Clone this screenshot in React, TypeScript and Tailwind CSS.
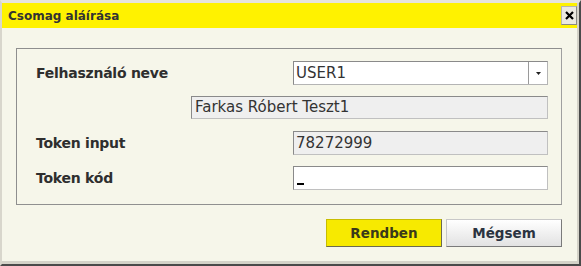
import React from "react";

const font = { fontFamily: '"DejaVu Sans", Verdana, sans-serif' };

export default function App() {
  return (
    <div className="w-[581px] h-[266px] bg-white" style={font}>
      <div className="w-[581px] h-[266px] flex flex-col border-l-2 border-t-[3px] border-l-[#d8d6cc] border-t-[#e6e4dc] border-r-2 border-b-2 border-r-[#4a4a4a] border-b-[#4a4a4a]">
        <div className="flex-1 flex flex-col border-r-2 border-b-[3px] border-r-[#d4d2c8] border-b-[#d4d2c8] bg-[#f6f6ea]">
          {/* Title bar */}
          <div className="h-[25px] bg-[#fff200] flex items-center justify-between pl-[6px] pr-0">
            <span className="text-[12px] font-bold text-[#333] leading-none">Csomag aláírása</span>
            <button className="w-[16px] h-[19px] flex items-center justify-center bg-[#ebe9e0] border border-[#b8b6ac] border-r-[#8a8a84] border-b-[#8a8a84]">
              <svg width="9" height="9" viewBox="0 0 9 9">
                <path d="M1 1 L8 8 M8 1 L1 8" stroke="#000" strokeWidth="2.2" />
              </svg>
            </button>
          </div>
          {/* Body */}
          <div className="flex-1 flex flex-col pl-[14px] pr-[15px] pt-[20px]">
            <div className="h-[157px] border border-[#8e8e8e] border-r-[#a0a0a0] border-b-[#909090] pl-[19px] pr-[13px] pt-[12px] flex flex-col">
              {/* Row 1 */}
              <div className="flex items-center h-[24px]">
                <div className="w-[257px] text-[14px] tracking-[-0.25px] font-bold text-[#2e2e2e]">Felhasználó neve</div>
                <div className="flex-1 h-[24px] flex border border-[#8a8a8a] border-b-[#b4b4b4] border-r-[#b4b4b4] bg-white">
                  <div className="flex-1 flex items-center pl-[2px] text-[15px] text-[#333]">USER1</div>
                  <div className="w-[19px] h-full border-l border-[#9a9a9a] flex items-center justify-center bg-white">
                    <svg width="5" height="3" viewBox="0 0 5 3">
                      <path d="M0 0 H5 L2.5 3 Z" fill="#222" />
                    </svg>
                  </div>
                </div>
              </div>
              {/* Row 2 */}
              <div className="flex items-center h-[24px] mt-[10px]">
                <div className="w-[155px]" />
                <div className="flex-1 h-[23px] flex items-center pl-[3px] bg-[#efefef] border border-[#8a8a8a] border-b-[#c0c0c0] border-r-[#c0c0c0] text-[15px] text-[#333]">
                  Farkas Róbert Teszt1
                </div>
              </div>
              {/* Row 3 */}
              <div className="flex items-center h-[24px] mt-[12px]">
                <div className="w-[257px] text-[14px] tracking-[-0.25px] font-bold text-[#2e2e2e]">Token input</div>
                <div className="flex-1 h-[24px] flex items-center pl-[2px] bg-[#efefef] border border-[#8a8a8a] border-b-[#c0c0c0] border-r-[#c0c0c0] text-[15px] text-[#333]">
                  78272999
                </div>
              </div>
              {/* Row 4 */}
              <div className="flex items-center h-[24px] mt-[11px]">
                <div className="w-[257px] text-[14px] tracking-[-0.25px] font-bold text-[#2e2e2e]">Token kód</div>
                <div className="flex-1 h-[24px] flex items-end pl-[3px] pb-[4px] bg-white border border-[#8a8a8a] border-b-[#c0c0c0] border-r-[#c0c0c0]">
                  <span className="w-[7px] h-[2px] bg-black" />
                </div>
              </div>
            </div>
            {/* Buttons */}
            <div className="flex justify-end gap-[4px] mt-[14px]">
              <button className="w-[116px] h-[28px] bg-[#f7ea00] border border-[#c8bd00] border-b-[#6b6b50] border-r-[#6b6b50] text-[13.5px] font-bold text-[#3a3a1a]">
                Rendben
              </button>
              <button className="w-[116px] h-[28px] bg-gradient-to-b from-[#ffffff] to-[#e2e2e2] border border-[#c8c8c8] border-b-[#7a7a7a] border-r-[#7a7a7a] text-[13.5px] font-bold text-[#2b3340]">
                Mégsem
              </button>
            </div>
          </div>
        </div>
      </div>
    </div>
  );
}
